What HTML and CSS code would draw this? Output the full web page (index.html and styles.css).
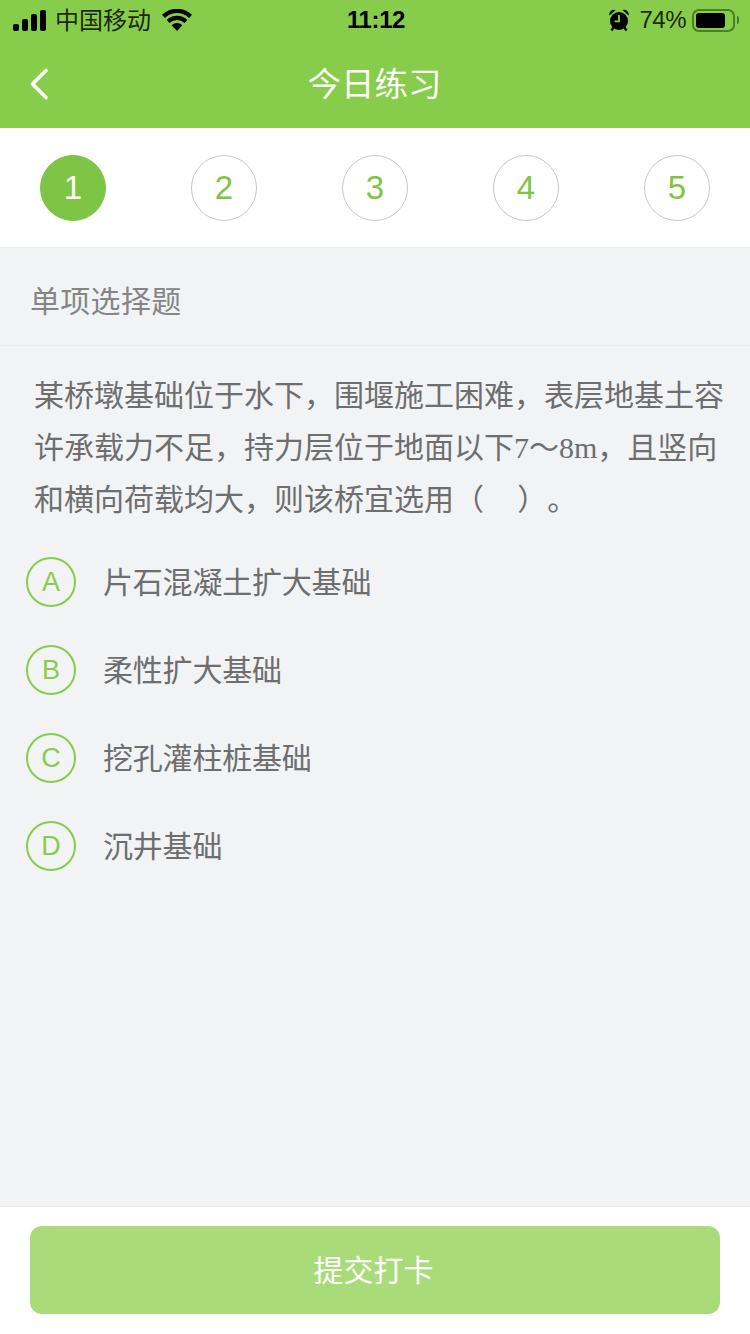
FILE: index.html
```html
<!DOCTYPE html>
<html lang="zh-CN">
  <head>
    <meta charset="UTF-8" />
    <link rel="stylesheet" href="styles.css">
  </head>
  <body>
    <div class="page">
      <header class="top">
        <div class="status">
          <div class="status-left">
            <svg class="signal" width="33" height="21" viewBox="0 0 33 21">
              <rect x="0" y="14" width="6" height="7" rx="2" />
              <rect x="9" y="9" width="6" height="12" rx="2" />
              <rect x="18" y="4" width="6" height="17" rx="2" />
              <rect x="27" y="0" width="6" height="21" rx="2" />
            </svg>
            <span class="carrier">中国移动</span>
            <svg class="wifi" width="30" height="22" viewBox="0 0 30 22">
              <path d="M15 22l-5.4-5.8a7.6 7.6 0 0 1 10.8 0z" />
              <path d="M7.6 14l-2.9-3.1a14.8 14.8 0 0 1 20.6 0l-2.9 3.1a10.6 10.6 0 0 0-14.8 0z" />
              <path d="M2.9 8.9L0 5.8a21.8 21.8 0 0 1 30 0l-2.9 3.1a17.6 17.6 0 0 0-24.2 0z" />
            </svg>
          </div>
          <div class="status-time">11:12</div>
          <div class="status-right">
            <svg class="alarm" width="20" height="22" viewBox="0 0 20 22">
              <circle cx="10" cy="12" r="9" />
              <path d="M.5 6.5a4.6 4.6 0 0 1 6-5.5zM19.500 6.500a4.600 4.600 0 0 0-6-5.500z" />
              <path d="M4.500 18.500L2.500 21.500M15.500 18.500l2 3" stroke="#000" stroke-width="2.400" />
              <path d="M10 6v6.400H5.600" fill="none" stroke="#87cd4b" stroke-width="1.800" />
            </svg>
            <span class="percent">74%</span>
            <div class="battery"><div class="battery-fill"></div></div>
            <div class="battery-cap"></div>
          </div>
        </div>
        <div class="navbar">
          <svg class="back" width="20" height="32" viewBox="0 0 20 32">
            <path d="M17 2.5L3.5 16 17 29.5" fill="none" stroke="#fff" stroke-width="3.6" stroke-linecap="round" stroke-linejoin="round" />
          </svg>
          <h1 class="title">今日练习</h1>
        </div>
      </header>

      <nav class="steps">
        <div class="step active">1</div>
        <div class="step">2</div>
        <div class="step">3</div>
        <div class="step">4</div>
        <div class="step">5</div>
      </nav>

      <main class="content">
        <div class="qtype">单项选择题</div>
        <p class="question">某桥墩基础位于水下，围堰施工困难，表层地基土容许承载力不足，持力层位于地面以下<span class="serif">7～8m</span>，且竖向和横向荷载均大，则该桥宜选用（&nbsp;&nbsp;&nbsp;&nbsp;）。</p>
        <ul class="options">
          <li class="option"><span class="letter">A</span><span class="option-text">片石混凝土扩大基础</span></li>
          <li class="option"><span class="letter">B</span><span class="option-text">柔性扩大基础</span></li>
          <li class="option"><span class="letter">C</span><span class="option-text">挖孔灌柱桩基础</span></li>
          <li class="option"><span class="letter">D</span><span class="option-text">沉井基础</span></li>
        </ul>
      </main>

      <footer class="bottom">
        <button class="submit" type="button">提交打卡</button>
      </footer>
    </div>
  </body>
</html>
```

FILE: styles.css
```css
* {
  box-sizing: border-box;
}

html,
body {
  margin: 0;
  padding: 0;
}

body {
  font-family: "Liberation Sans", "Noto Sans CJK SC", sans-serif;
  background-color: #f2f3f5;
}

.page {
  width: 750px;
  height: 1334px;
  display: flex;
  flex-direction: column;
  overflow: hidden;
}

.top {
  height: 128px;
  background-color: #87cd4b;
}

.status {
  height: 40px;
  padding: 0 11px 0 13px;
  display: flex;
  align-items: center;
  justify-content: space-between;
  color: #000;
}

.status-left,
.status-right {
  width: 250px;
  display: flex;
  align-items: center;
}

.status-right {
  justify-content: flex-end;
}

.signal,
.wifi,
.alarm {
  fill: #000;
}

.carrier {
  margin-left: 9px;
  padding-bottom: 4px;
  font-size: 24px;
  color: #1c2a10;
}

.wifi {
  margin-left: 11px;
}

.status-time {
  font-size: 24px;
  font-weight: bold;
  letter-spacing: -0.4px;
}

.percent {
  margin-left: 10px;
  font-size: 24px;
  letter-spacing: -0.5px;
  color: #1c2a10;
}

.battery {
  margin-left: 6px;
  width: 43px;
  height: 23px;
  border: 2px solid #4a7f22;
  border-radius: 7px;
  padding: 2px;
}

.battery-fill {
  width: 29px;
  height: 100%;
  background-color: #000;
  border-radius: 3px;
}

.battery-cap {
  width: 2px;
  height: 8px;
  margin-left: 2px;
  background-color: #4a7f22;
  border-radius: 0 2px 2px 0;
}

.navbar {
  position: relative;
  height: 88px;
  padding-left: 29px;
  display: flex;
  align-items: center;
}

.title {
  position: absolute;
  left: 0;
  right: 1px;
  top: 23px;
  margin: 0;
  text-align: center;
  font-size: 33.5px;
  font-weight: normal;
  line-height: 44px;
  color: #fff;
}

.steps {
  height: 120px;
  padding: 27px 40px 0;
  display: flex;
  justify-content: space-between;
  align-items: flex-start;
  background-color: #fff;
  border-bottom: 1px solid #e8e9eb;
}

.step {
  width: 66px;
  height: 66px;
  padding-bottom: 1px;
  border: 1px solid #c8c8c8;
  border-radius: 50%;
  display: flex;
  align-items: center;
  justify-content: center;
  font-size: 33px;
  color: #7fc545;
}

.step.active {
  background-color: #7fc545;
  border-color: #7fc545;
  color: #fff;
}

.content {
  flex: 1;
}

.qtype {
  height: 98px;
  padding: 4px 30px 0;
  display: flex;
  align-items: center;
  font-size: 30px;
  letter-spacing: 0.3px;
  color: #858585;
  border-bottom: 1px solid #eaebed;
}

.question {
  margin: 0;
  padding: 24px 25px 0 34px;
  font-size: 30px;
  line-height: 52px;
  text-spacing-trim: space-all;
  color: #6e6e6e;
}

.serif {
  font-family: "Liberation Serif", serif;
}

.options {
  margin: 0;
  padding: 12px 0 0 26px;
  list-style: none;
}

.option {
  height: 88px;
  display: flex;
  align-items: center;
  font-size: 30px;
  letter-spacing: -0.2px;
  color: #6e6e6e;
}

.option-text {
  padding-bottom: 4px;
}

.letter {
  width: 50px;
  height: 50px;
  margin-right: 27px;
  border: 2px solid #87cd4b;
  border-radius: 50%;
  display: flex;
  align-items: center;
  justify-content: center;
  font-size: 27px;
  letter-spacing: 0;
  color: #87cd4b;
}

.bottom {
  height: 128px;
  padding: 19px 30px 0;
  background-color: #fff;
  border-top: 1px solid #e6e7e9;
}

.submit {
  display: block;
  width: 690px;
  height: 88px;
  padding: 0 3px 5px 0;
  border: none;
  border-radius: 12px;
  background-color: #a9dc79;
  color: #fff;
  font-family: inherit;
  font-size: 30px;
}
```
